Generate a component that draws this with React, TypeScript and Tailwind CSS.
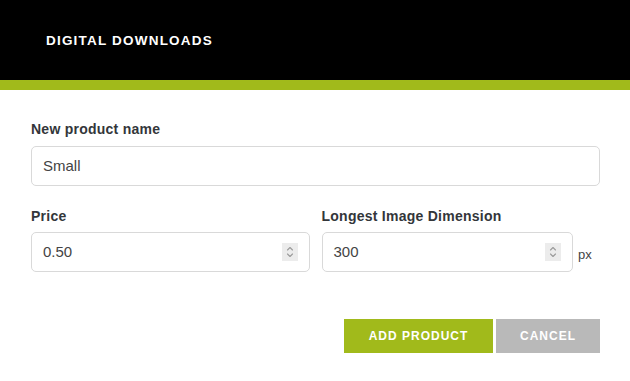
import React from "react";

function Spinner() {
  return (
    <div className="flex h-[18px] w-[16px] flex-col items-center justify-center bg-[#ececec]">
      <svg width="8" height="14" viewBox="0 0 8 14" fill="none" stroke="#9a9a9a" strokeWidth="1.1" strokeLinecap="round" strokeLinejoin="round">
        <path d="M1.5 5 L4 2.5 L6.5 5" />
        <path d="M1.5 9 L4 11.5 L6.5 9" />
      </svg>
    </div>
  );
}

function NumberInput({ value }: { value: string }) {
  return (
    <div className="flex h-[40px] w-full items-center justify-between rounded-[5px] border border-[#d9d9d9] bg-white pl-[11px] pr-[11px]">
      <span className="text-[15px] text-[#444]">{value}</span>
      <Spinner />
    </div>
  );
}

export default function App() {
  return (
    <div className="h-[381px] w-[630px] bg-white" style={{ fontFamily: '"Liberation Sans", Arial, sans-serif' }}>
      <div className="flex h-[80px] items-center bg-black pl-[46px] pt-[3px]">
        <span className="text-[13.5px] font-bold tracking-[1.2px] text-white">DIGITAL DOWNLOADS</span>
      </div>
      <div className="h-[10px] bg-[#a1ba1b]" />
      <div className="px-[30px] pl-[31px] pt-[31px]">
        <div className="text-[14px] font-bold leading-[16px] tracking-[0.25px] text-[#33363a]">New product name</div>
        <div className="mt-[9px] flex h-[40px] items-center rounded-[5px] border border-[#d9d9d9] pl-[11px]">
          <span className="text-[15px] text-[#444]">Small</span>
        </div>
        <div className="mt-[22px] grid grid-cols-2 gap-[12px]">
          <div>
            <div className="text-[14px] font-bold leading-[16px] tracking-[0.25px] text-[#33363a]">Price</div>
            <div className="mt-[8px]">
              <NumberInput value="0.50" />
            </div>
          </div>
          <div>
            <div className="text-[14px] font-bold leading-[16px] tracking-[0.25px] text-[#33363a]">Longest Image Dimension</div>
            <div className="mt-[8px] flex items-center">
              <div className="flex-1">
                <NumberInput value="300" />
              </div>
              <span className="w-[27px] pl-[5px] pt-[5px] text-[13px] text-[#444]">px</span>
            </div>
          </div>
        </div>
        <div className="mt-[47px] flex justify-end gap-[3px]">
          <button className="flex h-[34px] w-[149px] items-center justify-center bg-[#a1ba1b] text-[12px] font-bold tracking-[1px] text-white">
            ADD PRODUCT
          </button>
          <button className="flex h-[34px] w-[104px] items-center justify-center bg-[#b9b9b9] text-[12px] font-bold tracking-[1px] text-white">
            CANCEL
          </button>
        </div>
      </div>
    </div>
  );
}
